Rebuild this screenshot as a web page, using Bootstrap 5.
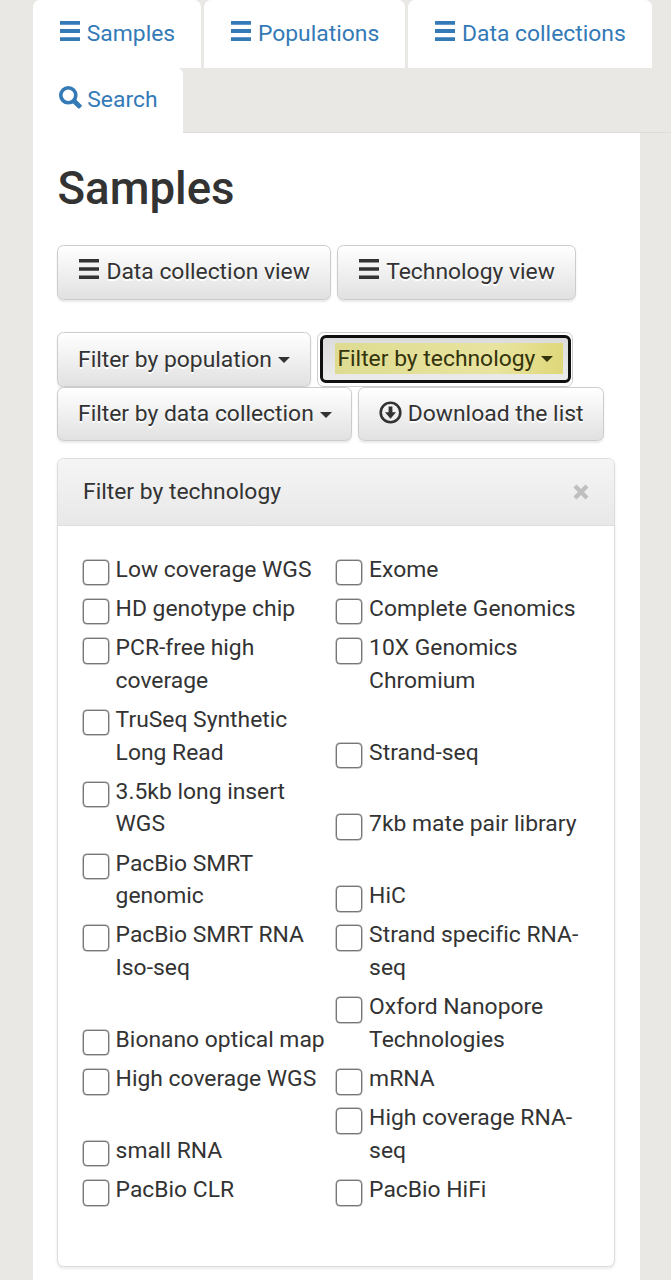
<!DOCTYPE html>
<html lang="en">
<head>
<meta charset="utf-8">
<meta name="viewport" content="width=device-width, initial-scale=1">
<title>Samples</title>
<link href="https://cdn.jsdelivr.net/npm/bootstrap@5.3.0/dist/css/bootstrap.min.css" rel="stylesheet">
<style>
body{background:#e9e8e4;font-family:Roboto,"Liberation Sans",sans-serif;font-size:22.86px;line-height:32.65px;color:#333;height:1280px;overflow:hidden;font-variant-ligatures:none}
.site-tabs{margin-left:33px;width:638px;height:133px;border-bottom:1px solid #dddcd8;column-gap:3px}
.site-tabs .nav-link{background:#fff;color:#337ab7;border:0;border-radius:7px 7px 0 0;padding:17.6px 26px 0 25px;height:67.5px;margin:0;white-space:nowrap}
.site-tabs .search-tab{height:66px;padding-top:16.1px;padding-left:25.500px;padding-right:25.500px;border-radius:0 6px 0 0}
.page{margin-left:33px;width:607px;height:1147px;padding:0 25px 0 24px}
.page h1{font-size:45.6px;font-weight:500;line-height:54px;margin:0;padding:29px 0 0 .5px;height:82px}
.ic{width:20px;height:20px;fill:currentColor;vertical-align:0;margin:0 7.3px 0 1.5px}
.ic-round{width:23px;height:23px;vertical-align:-2.500px;margin:0 5.8px 0 0}
.btn-soft{--bs-btn-padding-x:19.6px;--bs-btn-padding-y:9.9px;--bs-btn-font-size:22.86px;--bs-btn-line-height:32.65px;--bs-btn-color:#333;--bs-btn-border-color:#ccc;--bs-btn-border-radius:6.5px;--bs-btn-border-width:1.5px;height:54.5px;background:linear-gradient(#fff,#e1e1e1);text-shadow:0 1.6px 0 #fff;box-shadow:0 1.6px 2px rgba(0,0,0,.09);white-space:nowrap}
.views{margin-top:30px;gap:6.200px}
.views .btn{padding-right:19.7px}
.views .ic{vertical-align:-.5px}
.filters{margin-top:32.5px;column-gap:6px}
.filters .btn{padding-left:20px;padding-top:10.8px;padding-bottom:9px}
.filters .btn:last-child{padding-left:19.600px;padding-right:19.400px}
.caret{display:inline-block;border:6.4px solid transparent;border-top-color:currentColor;border-bottom:0;vertical-align:3.500px;margin-left:6px}
.filters .btn-on{background:#fff;padding:3px 2px 3px 3px;border-color:#ccc;box-shadow:none}
.ring{display:block;height:48px;padding:4.8px 14.500px 0 14.800px;border:3px solid #101010;border-radius:6px;background:linear-gradient(#dcdcdc,#ebebeb);margin:-1px -1px 0}
.hl{background:linear-gradient(100deg,#dedb91,#e8e4a0 70%,#dfd779);color:#33330c;padding:2px 10px 2px 2px;margin:0 -10px 0 -2px;text-shadow:none}
.panel{margin-top:17px;height:808.5px;border:1.3px solid #ddd;border-radius:6.5px;box-shadow:0 1.6px 3px rgba(0,0,0,.08)}
.panel .card-header{height:66.5px;padding:1px 25.500px 0 25px;background:linear-gradient(#f5f5f5,#e8e8e8);border-bottom:1px solid #ddd;border-radius:5px 5px 0 0}
.panel .card-body{padding:28.300px 0 0 24.5px}
.choice{width:253.5px;margin-bottom:6.53px}
.choice input{appearance:none;width:25.5px;height:25.5px;border:1px solid #767676;box-shadow:0 0 0 .5px #909090;border-radius:4px;background:#fff;margin:6px 7.100px -3px .5px;flex:none}
.choice:nth-child(even) input{margin-left:0;margin-right:7.600px}
.choice span{width:212px}
</style>
</head>
<body>
<ul class="nav site-tabs align-content-start">
<li class="nav-item"><a class="nav-link" href="#"><svg class="ic" viewBox="0 0 20 20"><path d="M0 0h20v3.8H0zM0 8.1h20v3.8H0zM0 16.2h20V20H0z"/></svg>Samples</a></li>
<li class="nav-item"><a class="nav-link" href="#"><svg class="ic" viewBox="0 0 20 20"><path d="M0 0h20v3.8H0zM0 8.1h20v3.8H0zM0 16.2h20V20H0z"/></svg>Populations</a></li>
<li class="nav-item"><a class="nav-link" href="#"><svg class="ic" viewBox="0 0 20 20"><path d="M0 0h20v3.8H0zM0 8.1h20v3.8H0zM0 16.2h20V20H0z"/></svg>Data collections</a></li>
<li class="nav-item"><a class="nav-link search-tab" href="#"><svg class="ic ic-round" viewBox="0 0 23 23"><circle cx="9.3" cy="9.3" r="7.5" fill="none" stroke="currentColor" stroke-width="3.6"/><path d="M13 16.500 16.500 13l6 6q.8.8 0 1.600l-1.700 1.700q-.9.8-1.700 0z"/></svg>Search</a></li>
</ul>
<main class="page bg-white">
<h1>Samples</h1>
<div class="views d-flex">
<button class="btn btn-soft"><svg class="ic" viewBox="0 0 20 20"><path d="M0 0h20v3.5H0zM0 8.2h20v3.5H0zM0 16.4h20V20H0z"/></svg>Data collection view</button>
<button class="btn btn-soft"><svg class="ic" viewBox="0 0 20 20"><path d="M0 0h20v3.5H0zM0 8.2h20v3.5H0zM0 16.4h20V20H0z"/></svg>Technology view</button>
</div>
<div class="filters d-flex flex-wrap">
<button class="btn btn-soft">Filter by population<i class="caret"></i></button>
<button class="btn btn-soft btn-on"><span class="ring"><span class="hl">Filter by technology<i class="caret"></i></span></span></button>
<button class="btn btn-soft">Filter by data collection<i class="caret"></i></button>
<button class="btn btn-soft"><svg class="ic ic-round" viewBox="0 0 23 23"><circle cx="11.5" cy="11.5" r="9.8" fill="none" stroke="currentColor" stroke-width="2.6"/><path d="M9.6 5.5h3.8v5.7H17l-5.5 6.500L6 11.200h3.600z"/></svg>Download the list</button>
</div>
<section class="card panel">
<div class="card-header d-flex align-items-center justify-content-between"><span>Filter by technology</span><svg width="16" height="16" viewBox="0 0 16 16"><path d="M2 2l12 12M14 2L2 14" stroke="#bfbfbf" stroke-width="4.3"/></svg></div>
<div class="card-body d-flex flex-wrap align-items-end align-content-start">
<label class="choice d-flex align-items-start"><input type="checkbox"><span>Low coverage WGS</span></label>
<label class="choice d-flex align-items-start"><input type="checkbox"><span>Exome</span></label>
<label class="choice d-flex align-items-start"><input type="checkbox"><span>HD genotype chip</span></label>
<label class="choice d-flex align-items-start"><input type="checkbox"><span>Complete Genomics</span></label>
<label class="choice d-flex align-items-start"><input type="checkbox"><span>PCR-free high coverage</span></label>
<label class="choice d-flex align-items-start"><input type="checkbox"><span>10X Genomics Chromium</span></label>
<label class="choice d-flex align-items-start"><input type="checkbox"><span>TruSeq Synthetic Long Read</span></label>
<label class="choice d-flex align-items-start"><input type="checkbox"><span>Strand-seq</span></label>
<label class="choice d-flex align-items-start"><input type="checkbox"><span>3.5kb long insert WGS</span></label>
<label class="choice d-flex align-items-start"><input type="checkbox"><span>7kb mate pair library</span></label>
<label class="choice d-flex align-items-start"><input type="checkbox"><span>PacBio SMRT genomic</span></label>
<label class="choice d-flex align-items-start"><input type="checkbox"><span>HiC</span></label>
<label class="choice d-flex align-items-start"><input type="checkbox"><span>PacBio SMRT RNA Iso-seq</span></label>
<label class="choice d-flex align-items-start"><input type="checkbox"><span>Strand specific RNA-seq</span></label>
<label class="choice d-flex align-items-start"><input type="checkbox"><span>Bionano optical map</span></label>
<label class="choice d-flex align-items-start"><input type="checkbox"><span>Oxford Nanopore Technologies</span></label>
<label class="choice d-flex align-items-start"><input type="checkbox"><span>High coverage WGS</span></label>
<label class="choice d-flex align-items-start"><input type="checkbox"><span>mRNA</span></label>
<label class="choice d-flex align-items-start"><input type="checkbox"><span>small RNA</span></label>
<label class="choice d-flex align-items-start"><input type="checkbox"><span>High coverage RNA-seq</span></label>
<label class="choice d-flex align-items-start"><input type="checkbox"><span>PacBio CLR</span></label>
<label class="choice d-flex align-items-start"><input type="checkbox"><span>PacBio HiFi</span></label>
</div>
</section>
</main>
<script src="https://cdn.jsdelivr.net/npm/bootstrap@5.3.0/dist/js/bootstrap.bundle.min.js"></script>
</body>
</html>
